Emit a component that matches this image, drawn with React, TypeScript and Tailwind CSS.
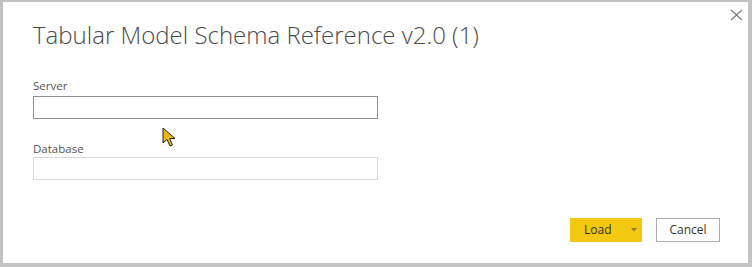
import React from "react";

export default function App() {
  const font = { fontFamily: '"Segoe UI", "Open Sans", "Liberation Sans", sans-serif' };
  return (
    <div className="w-[752px] h-[267px] bg-[#c3c3c3] pt-[2px] pl-[3px] pr-[4px] pb-[4px]" style={font}>
      <div className="relative w-full h-full bg-white flex flex-col">
        <button className="absolute right-[5px] top-[6px] w-[14px] h-[14px] flex items-center justify-center">
          <svg width="13" height="12" viewBox="0 0 13 12">
            <path d="M1 1 L12 11 M12 1 L1 11" stroke="#7a7a7a" strokeWidth="1.2" />
          </svg>
        </button>
        <div className="pl-[30px] pt-[17px] flex flex-col items-start">
          <h1 className="text-[24px] leading-[32px] font-light text-[#4a4a4a]">
            Tabular Model Schema Reference v2.0 (1)
          </h1>
          <label className="mt-[28px] text-[11.5px] leading-[14px] text-[#555]">Server</label>
          <div className="mt-[3px] w-[345px] h-[23px] border border-[#8e8e8e] bg-white" />
          <label className="mt-[23px] text-[11.5px] leading-[14px] text-[#555]">Database</label>
          <div className="mt-[1px] w-[345px] h-[23px] border border-[#d8d8d8] bg-white" />
        </div>
        <div className="mt-auto flex justify-end gap-[14px] pr-[28px] pb-[21px]">
          <button className="w-[72px] h-[24px] bg-[#f2c811] flex items-center text-[12px] text-[#333]">
            <span className="pl-[14px]">Load</span>
            <svg className="ml-[19px]" width="6" height="4" viewBox="0 0 6 4">
              <path d="M0 0 L6 0 L3 3.5 Z" fill="#8a7a30" />
            </svg>
          </button>
          <button className="w-[64px] h-[24px] border border-[#aaaaaa] bg-white text-[12px] text-[#333] flex items-center justify-center">
            Cancel
          </button>
        </div>
        <div className="absolute left-[159px] top-[125px]">
          <svg width="16" height="22" viewBox="0 0 16 22">
            <path d="M1 1 L1 16 L5 12.5 L8 19 L10.5 18 L7.6 11.6 L13 11.5 Z" fill="#f0b800" stroke="#222" strokeWidth="1" strokeLinejoin="round" />
          </svg>
        </div>
      </div>
    </div>
  );
}
